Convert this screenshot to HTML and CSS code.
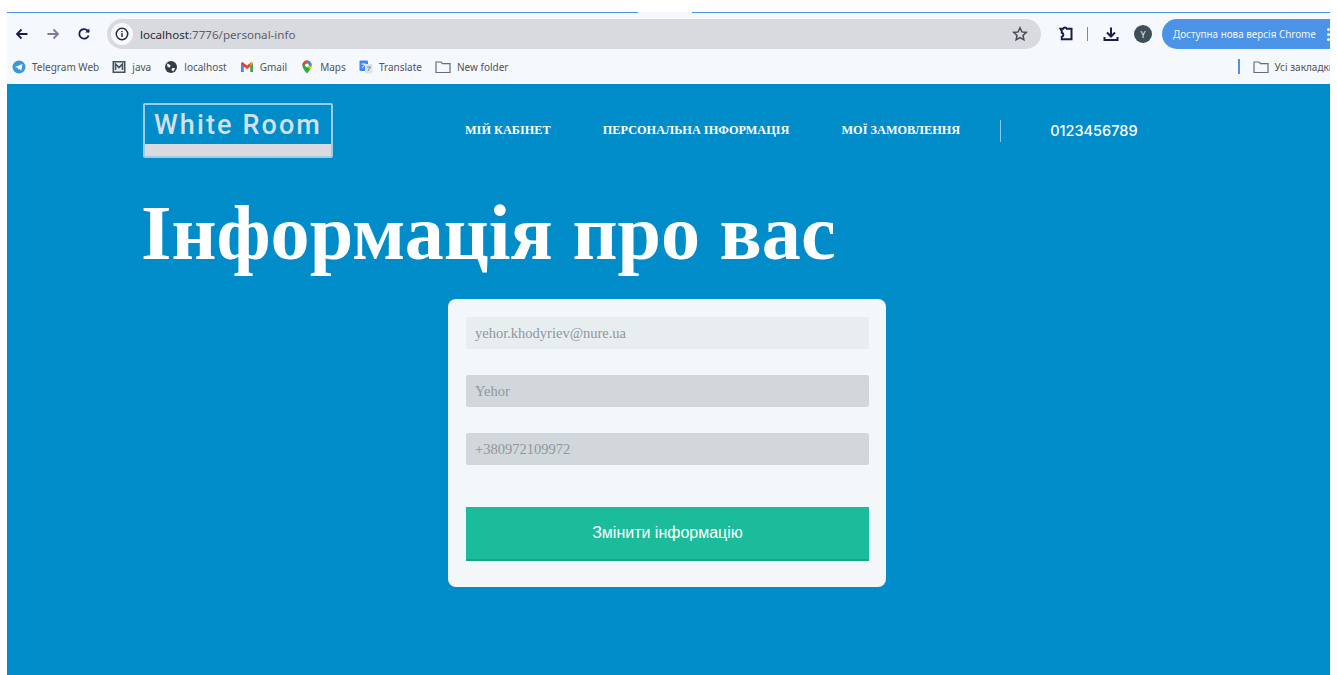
FILE: index.html
```html
<!DOCTYPE html>
<html lang="uk">
<head>
<meta charset="utf-8">
<title>Інформація про вас</title>
<link rel="stylesheet" href="styles.css">
</head>
<body>
<div class="window">
  <div class="toolbar">
    <span class="tab-notch"></span>
    <div class="nav-buttons">
      <svg class="tb-icon" viewBox="0 0 14 14"><path d="M12.500 7H2M6.500 2.500 2 7l4.500 4.500" class="ink"/></svg>
      <svg class="tb-icon" viewBox="0 0 14 14"><path d="M1.500 7H12M7.500 2.500 12 7l-4.500 4.500" class="ink muted"/></svg>
      <svg class="tb-icon" viewBox="0 0 14 14"><path d="M11.600 8.500A4.800 4.800 0 1 1 10.600 3.600L12 5" class="ink"/><path d="M12.300 1.500v4.100H8.200z" class="solid"/></svg>
    </div>
    <div class="omnibox">
      <span class="site-info"><svg viewBox="0 0 14 14" width="14" height="14"><circle cx="7" cy="7" r="5.700" class="ink thin"/><path d="M7 6.300v3.600M7 4v1.300" class="ink thin"/></svg></span>
      <span class="url"><span class="host">localhost</span>:7776/personal-info</span>
      <svg class="star" viewBox="0 0 16 16"><path d="m8 1.800 1.900 4.100 4.400.5-3.300 3 .9 4.400L8 11.600l-3.900 2.200.9-4.400-3.300-3 4.400-.5z" class="ink star-line"/></svg>
    </div>
    <div class="tools">
      <svg class="ext" viewBox="0 0 16 16"><path d="M2.500 2.800h2.700a1.900 1.900 0 0 1 3.600 0h4.700v10.400H3.800v-2.600a2 2 0 0 0 0-3.900V5z" class="ink heavy"/></svg>
      <span class="tool-sep"></span>
      <svg class="dl" viewBox="0 0 16 16"><path d="M8 1.500v8.500M4 6.500 8 10.500l4-4M1.500 11v3h13v-3" class="ink heavy"/></svg>
      <span class="avatar">Y</span>
      <span class="update-chip">Доступна нова версія Chrome<span class="dots"><i></i><i></i><i></i></span></span>
    </div>
  </div>

  <div class="bookmarks">
    <span class="bm"><svg viewBox="0 0 14 14"><circle cx="7" cy="7" r="6.500" fill="#3a96dd"/><path d="M3 7l7.500-3-1.200 6.500L7 8.800 6 9.800V8z" fill="#fff"/></svg>Telegram Web</span>
    <span class="bm"><svg viewBox="0 0 14 14"><rect x=".5" y="1" width="13" height="12" fill="#44525e"/><rect x="2" y="2.500" width="10" height="9" fill="#eef1f4"/><path d="M3.500 10V4L7 7.500 10.500 4v6" fill="none" stroke="#44525e" stroke-width="1.600"/></svg>java</span>
    <span class="bm"><svg viewBox="0 0 14 14"><circle cx="7" cy="7" r="6" fill="#333d46"/><path d="M3 3.500 6.500 5 6 7.500 3.500 7zM8 8l3.200.3-2 3.300L7.500 10z" fill="#f5f8fd"/></svg>localhost</span>
    <span class="bm"><svg viewBox="0 0 14 14"><path d="M1 3v9h2.500V6.500L7 9l3.500-2.500V12H13V3l-1.500-1L7 5.500 2.500 2z" fill="#ea4335"/><path d="M1 3v9h2.500V6.500z" fill="#4285f4"/><path d="M13 3v9h-2.500V6.500z" fill="#34a853"/><path d="m13 3-2.500 3.500V4l1-2z" fill="#fbbc04"/></svg>Gmail</span>
    <span class="bm"><svg viewBox="0 0 14 14"><path d="M7 .5a4.700 4.700 0 0 0-4.700 4.700C2.300 8.600 7 13.500 7 13.500s4.700-4.900 4.700-8.300A4.700 4.700 0 0 0 7 .5z" fill="#34a853"/><path d="M2.300 5.200A4.700 4.700 0 0 1 7 .5v3z" fill="#ea4335"/><path d="M7 .5a4.700 4.700 0 0 1 4.700 4.700L9 5z" fill="#4285f4"/><path d="M11.700 5.200c0 1.300-.7 2.800-1.500 4L7 7z" fill="#fbbc04"/><circle cx="7" cy="5.200" r="1.800" fill="#fff"/></svg>Maps</span>
    <span class="bm"><svg viewBox="0 0 14 14"><rect x=".5" y=".5" width="8.500" height="10.500" rx="1" fill="#4285f4"/><rect x="6" y="4" width="7.500" height="9.500" rx="1" fill="#dfe3e8"/><path d="M2.500 4h4M3 7.500c1.500-.5 2.500-2 2.800-3.500" stroke="#fff" stroke-width="1" fill="none"/><path d="M8 7h4M9 11l2-4" stroke="#7b8794" stroke-width="1" fill="none"/></svg>Translate</span>
    <span class="bm"><svg class="folder" viewBox="0 0 16 14"><path d="M1 2h5l1.500 1.700H15V12.500H1z" class="folder-line"/></svg>New folder</span>
    <span class="bm-end">
      <span class="bm-sep"></span>
      <span class="bm"><svg class="folder" viewBox="0 0 16 14"><path d="M1 2h5l1.500 1.700H15V12.500H1z" class="folder-line"/></svg>Усі закладки</span>
    </span>
  </div>

  <main class="site">
    <header class="site-header">
      <a class="logo"><span class="logo-text">White Room</span><span class="logo-band"></span></a>
      <nav class="site-nav">
        <a>МІЙ КАБІНЕТ</a>
        <a>ПЕРСОНАЛЬНА ІНФОРМАЦІЯ</a>
        <a>МОЇ ЗАМОВЛЕННЯ</a>
      </nav>
      <span class="phone">0123456789</span>
    </header>

    <h1 class="page-title">Інформація про вас</h1>

    <form class="card">
      <input class="field field-readonly" type="text" placeholder="yehor.khodyriev@nure.ua" readonly>
      <input class="field" type="text" placeholder="Yehor">
      <input class="field" type="text" placeholder="+380972109972">
      <button class="submit" type="button">Змінити інформацію</button>
    </form>
  </main>
</div>
</body>
</html>
```

FILE: styles.css
```css
* { box-sizing: border-box; }

html, body { height: 100%; }

body {
  margin: 0;
  background: #fff;
  overflow: hidden;
  font-family: "Liberation Sans", sans-serif;
}

.window {
  height: 675px;
  margin: 0 7px;
  padding-top: 12px;
  display: flex;
  flex-direction: column;
}

/* Browser chrome */
.toolbar {
  position: relative;
  height: 38px;
  flex: none;
  display: flex;
  align-items: center;
  background: #f5f8fd;
  border-top: 1px solid #4a93e6;
  padding-top: 6px;
  padding-bottom: 1px;
}

/* Break in the accent line above the active tab */
.tab-notch {
  position: absolute;
  top: -1px;
  left: 631px;
  width: 54px;
  height: 1px;
  background: #f5f8fd;
}

.nav-buttons {
  display: flex;
  align-items: center;
  width: 100px;
  padding-left: 8px;
  gap: 17px;
  flex: none;
}

.tb-icon { width: 14px; height: 14px; flex: none; }

.ink {
  fill: none;
  stroke: #1f1a4d;
  stroke-width: 1.800;
}

.ink.muted { stroke: #7d7a9c; }
.ink.thin { stroke: #2a2a33; stroke-width: 1.500; }
.ink.heavy { stroke-width: 2; }
.ink.star-line { stroke: #4a4d55; stroke-width: 1.500; }
.solid { fill: #1f1a4d; }

.omnibox {
  width: 934px;
  height: 30px;
  flex: none;
  display: flex;
  align-items: center;
  background: #d9dae0;
  border-radius: 15px;
  padding: 0 13px 0 4px;
}

.site-info {
  width: 22px;
  height: 22px;
  border-radius: 50%;
  background: #f5f8fd;
  display: flex;
  align-items: center;
  justify-content: center;
  flex: none;
}

.url {
  margin-left: 7px;
  font-family: "Noto Sans", sans-serif;
  font-size: 11.600px;
  color: #5d6066;
  flex: 1;
}

.host { color: #2a2c31; }

.star { width: 16px; height: 16px; flex: none; }

.tools {
  display: flex;
  align-items: center;
  flex: 1;
  min-width: 0;
  padding-left: 17px;
}

.ext { width: 16px; height: 16px; flex: none; }

.tool-sep {
  width: 1px;
  height: 14px;
  background: #4a93e6;
  margin: 0 15px 0 13px;
  flex: none;
}

.dl { width: 16px; height: 16px; flex: none; }

.avatar {
  width: 18px;
  height: 18px;
  margin-left: 15px;
  border-radius: 50%;
  background: #3f4f57;
  color: #e8ecef;
  font-family: "Noto Sans", sans-serif;
  font-size: 9px;
  display: flex;
  align-items: center;
  justify-content: center;
  flex: none;
}

.update-chip {
  margin-left: 10px;
  height: 30px;
  flex: 1;
  min-width: 0;
  padding-left: 11px;
  display: flex;
  align-items: center;
  justify-content: space-between;
  background: #4a93e6;
  border-radius: 15px 0 0 15px;
  color: #f2f6fd;
  font-family: "Noto Sans", sans-serif;
  font-size: 9.900px;
  white-space: nowrap;
}

.dots {
  display: flex;
  flex-direction: column;
  gap: 2px;
}

.dots i {
  width: 3px;
  height: 3px;
  border-radius: 50%;
  background: #f2f6fd;
}

.bookmarks {
  height: 34px;
  flex: none;
  display: flex;
  align-items: center;
  background: #f5f8fd;
  padding: 0 0 1px 5px;
  gap: 13.100px;
  font-family: "Noto Sans", sans-serif;
  font-size: 10px;
  color: #50535a;
  white-space: nowrap;
  overflow: hidden;
}

.bm {
  display: inline-flex;
  align-items: center;
  gap: 6px;
}

.bm svg { width: 14px; height: 14px; flex: none; }
.bm svg.folder { width: 16px; height: 14px; }

.folder-line {
  fill: none;
  stroke: #5d6f80;
  stroke-width: 1.200;
}

.bm-end {
  margin-left: auto;
  margin-right: -5px;
  display: flex;
  align-items: center;
  gap: 13px;
}

.bm-sep {
  width: 2px;
  height: 15px;
  background: #4a93e6;
}

/* Site */
.site {
  flex: 1;
  background: #008cc9;
  padding: 19px 0 0 136px;
}

.site-header {
  display: flex;
  align-items: center;
}

.logo {
  width: 190px;
  height: 55px;
  flex: none;
  display: flex;
  flex-direction: column;
  border: 2px solid #9ccde4;
  border-radius: 2px;
}

.logo-text {
  height: 39px;
  display: flex;
  align-items: center;
  justify-content: center;
  color: #d3e0e8;
  font-family: "Roboto", sans-serif;
  font-weight: 500;
  font-size: 27px;
  letter-spacing: 2.100px;
}

.logo-band {
  flex: 1;
  background: #d9dae0;
}

.site-nav {
  display: flex;
  gap: 52px;
  margin-left: 132px;
  padding-right: 40px;
  border-right: 1px solid rgba(255, 255, 255, .55);
  height: 22px;
  align-items: center;
}

.site-nav a {
  color: #fff;
  font-family: "Liberation Serif", serif;
  font-weight: bold;
  font-size: 12.300px;
  white-space: nowrap;
}

.phone {
  margin-left: 49px;
  color: #fff;
  font-family: "Inter", sans-serif;
  font-weight: 500;
  font-size: 14.500px;
}

.page-title {
  margin: 30px 0 0 -2px;
  color: #fff;
  font-family: "Liberation Serif", serif;
  font-weight: bold;
  font-size: 78.200px;
  line-height: 90px;
  white-space: nowrap;
}

.card {
  width: 438px;
  height: 288px;
  margin: 21px 0 0 305px;
  padding: 18px 17px 18px 18px;
  display: flex;
  flex-direction: column;
  background: #f3f7f9;
  border-radius: 8px;
}

.field {
  height: 32px;
  flex: none;
  border: 0;
  border-radius: 2px;
  padding: 0 9px;
  background: #d1d7da;
  font-family: "Liberation Serif", serif;
  font-size: 14.500px;
  margin-bottom: 26px;
}

.field::placeholder { color: #8f979c; opacity: 1; }

.field-readonly { background: #e8edef; }

.submit {
  height: 54px;
  flex: none;
  margin-top: 16px;
  border: 0;
  border-bottom: 2px solid #17a88a;
  background: #1abc9c;
  color: #fff;
  font-family: "Liberation Sans", sans-serif;
  font-size: 16px;
}
```
